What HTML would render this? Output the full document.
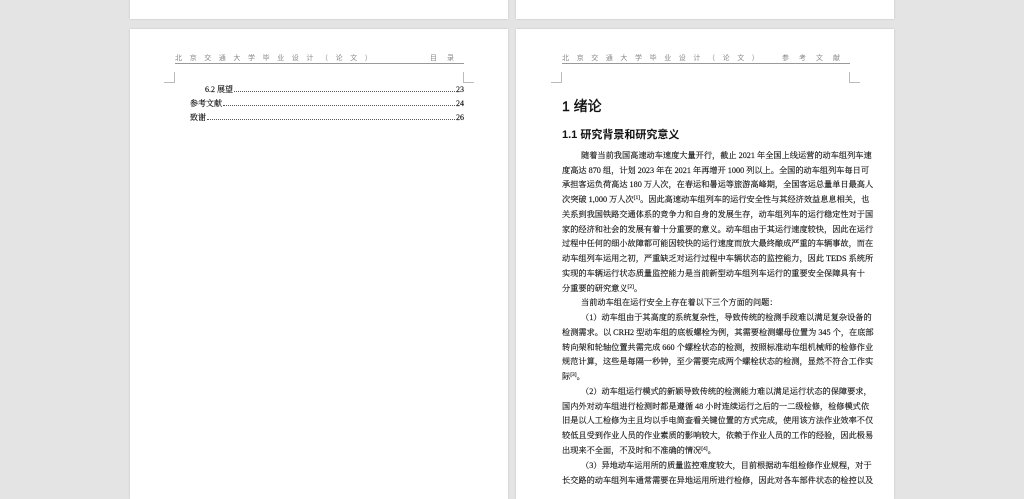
<!DOCTYPE html>
<html><head><meta charset="utf-8"><style>
*{margin:0;padding:0;box-sizing:border-box}
body{width:1024px;height:483px;background:#e4e4e4;position:relative;overflow:hidden;font-family:"Liberation Serif","Noto Serif CJK SC",serif;color:#111}
.pg{position:absolute;background:#fff;box-shadow:0 0 2px rgba(0,0,0,.15)}
.a{position:absolute;white-space:nowrap}
.hdr{position:absolute;font-family:"Liberation Sans","Noto Sans CJK SC",sans-serif;font-size:7px;color:#888;border-bottom:1px solid #999;height:10px;line-height:9px;display:flex;justify-content:space-between;letter-spacing:7.6px}
.cm{position:absolute;width:11px;height:11px;border-color:#bbb;border-style:solid;border-width:0}
.L{position:absolute;left:562px;width:287px;font-size:8.2px;line-height:14.75px;white-space:nowrap;text-align:justify;text-align-last:justify;overflow:visible;-webkit-text-stroke:0.15px #111}
.n{text-align-last:left}
.i{text-indent:19px}
sup{font-size:5.5px;vertical-align:3px;line-height:0}
.toc{position:absolute;font-size:8px;display:flex;align-items:baseline;white-space:nowrap;-webkit-text-stroke:0.15px #111}
.toc .d{flex:1;border-bottom:1px dotted #555;margin:0 1px;height:1px}
</style></head><body>
<div class="pg" style="left:130px;top:-5px;width:378px;height:24px"></div>
<div class="pg" style="left:516px;top:-5px;width:378px;height:24px"></div>
<div class="pg" style="left:130px;top:29px;width:378px;height:470px"></div>
<div class="pg" style="left:516px;top:29px;width:378px;height:470px"></div>

<div class="hdr" style="left:175px;top:54px;width:289px"><span>北京交通大学毕业设计（论文）</span><span style="letter-spacing:10px">目录</span></div>
<div class="cm" style="left:164px;top:72px;border-right-width:1px;border-bottom-width:1px"></div>
<div class="cm" style="left:463px;top:72px;border-left-width:1px;border-bottom-width:1px"></div>
<div class="toc" style="left:205px;top:84px;width:259px"><span>6.2 展望</span><span class="d"></span><span>23</span></div>
<div class="toc" style="left:190px;top:98px;width:274px"><span>参考文献</span><span class="d"></span><span>24</span></div>
<div class="toc" style="left:190px;top:112px;width:274px"><span>致谢</span><span class="d"></span><span>26</span></div>

<div class="hdr" style="left:562px;top:54px;width:288px"><span>北京交通大学毕业设计（论文）</span><span style="letter-spacing:10px">参考文献</span></div>
<div class="cm" style="left:551px;top:72px;border-right-width:1px;border-bottom-width:1px"></div>
<div class="cm" style="left:849px;top:72px;border-left-width:1px;border-bottom-width:1px"></div>

<div class="a" style="left:562px;top:96px;font-family:'Liberation Sans','Noto Sans CJK SC',sans-serif;font-size:14px;-webkit-text-stroke:0.4px #111">1 绪论</div>
<div class="a" style="left:562px;top:126px;font-family:'Liberation Sans','Noto Sans CJK SC',sans-serif;font-size:11px;font-weight:bold">1.1 研究背景和研究意义</div>

<div class="L i" style="top:149px">随着当前我国高速动车速度大量开行，截止 2021 年全国上线运营的动车组列车速</div>
<div class="L" style="top:164px">度高达 870 组，计划 2023 年在 2021 年再增开 1000 列以上。全国的动车组列车每日可</div>
<div class="L" style="top:178px">承担客运负荷高达 180 万人次，在春运和暑运等旅游高峰期，全国客运总量单日最高人</div>
<div class="L" style="top:193px">次突破 1,000 万人次<sup>[1]</sup>。因此高速动车组列车的运行安全性与其经济效益息息相关，也</div>
<div class="L" style="top:208px">关系到我国铁路交通体系的竞争力和自身的发展生存，动车组列车的运行稳定性对于国</div>
<div class="L" style="top:223px">家的经济和社会的发展有着十分重要的意义。动车组由于其运行速度较快，因此在运行</div>
<div class="L" style="top:237px">过程中任何的细小故障都可能因较快的运行速度而放大最终酿成严重的车辆事故，而在</div>
<div class="L" style="top:252px">动车组列车运用之初，严重缺乏对运行过程中车辆状态的监控能力，因此 TEDS 系统所</div>
<div class="L" style="top:267px">实现的车辆运行状态质量监控能力是当前新型动车组列车运行的重要安全保障具有十</div>
<div class="L n" style="top:282px">分重要的研究意义<sup>[2]</sup>。</div>
<div class="L n i" style="top:296px">当前动车组在运行安全上存在着以下三个方面的问题：</div>
<div class="L i" style="top:311px">（1）动车组由于其高度的系统复杂性，导致传统的检测手段难以满足复杂设备的</div>
<div class="L" style="top:326px">检测需求。以 CRH2 型动车组的底板螺栓为例，其需要检测螺母位置为 345 个，在底部</div>
<div class="L" style="top:341px">转向架和轮轴位置共需完成 660 个螺栓状态的检测，按照标准动车组机械师的检修作业</div>
<div class="L" style="top:355px">规范计算，这些是每隔一秒钟，至少需要完成两个螺栓状态的检测，显然不符合工作实</div>
<div class="L n" style="top:370px">际<sup>[3]</sup>。</div>
<div class="L i" style="top:385px">（2）动车组运行模式的新颖导致传统的检测能力难以满足运行状态的保障要求，</div>
<div class="L" style="top:400px">国内外对动车组进行检测时都是遵循 48 小时连续运行之后的一二级检修，检修模式依</div>
<div class="L" style="top:414px">旧是以人工检修为主且均以手电筒查看关键位置的方式完成，使用该方法作业效率不仅</div>
<div class="L" style="top:429px">较低且受到作业人员的作业素质的影响较大，依赖于作业人员的工作的经验，因此极易</div>
<div class="L n" style="top:444px">出现来不全面，不及时和不准确的情况<sup>[4]</sup>。</div>
<div class="L i" style="top:459px">（3）异地动车运用所的质量监控难度较大，目前根据动车组检修作业规程，对于</div>
<div class="L" style="top:474px">长交路的动车组列车通常需要在异地运用所进行检修，因此对各车部件状态的检控以及</div>
</body></html>
